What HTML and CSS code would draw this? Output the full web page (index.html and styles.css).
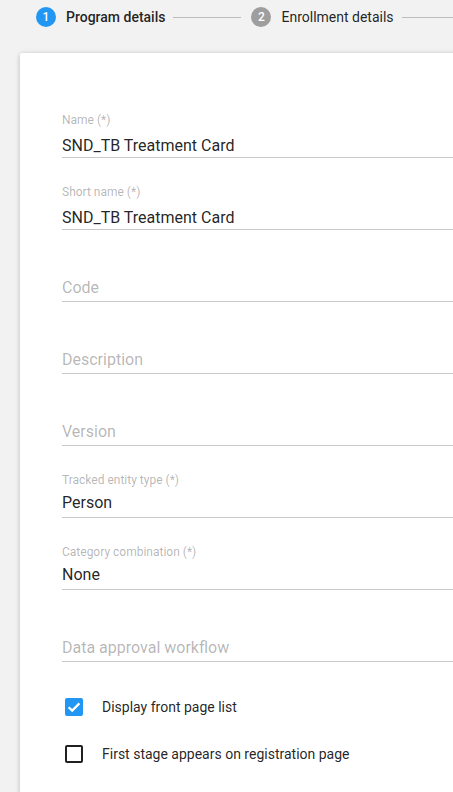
FILE: index.html
```html
<!DOCTYPE html>
<html>
<head>
<meta charset="utf-8">
<link rel="stylesheet" href="styles.css">
</head>
<body>
<div class="page">
  <div class="stepper">
    <div class="step active">
      <span class="step-num">1</span>
      <span class="step-label">Program details</span>
    </div>
    <div class="step-line short"></div>
    <div class="step">
      <span class="step-num">2</span>
      <span class="step-label">Enrollment details</span>
    </div>
    <div class="step-line"></div>
  </div>

  <div class="card">
    <div class="field filled">
      <label class="field-label">Name (*)</label>
      <div class="field-value">SND_TB Treatment Card</div>
    </div>
    <div class="field filled">
      <label class="field-label">Short name (*)</label>
      <div class="field-value">SND_TB Treatment Card</div>
    </div>
    <div class="field empty">
      <div class="field-value placeholder">Code</div>
    </div>
    <div class="field empty">
      <div class="field-value placeholder">Description</div>
    </div>
    <div class="field empty">
      <div class="field-value placeholder">Version</div>
    </div>
    <div class="field filled select">
      <label class="field-label">Tracked entity type (*)</label>
      <div class="field-value">Person</div>
    </div>
    <div class="field filled select">
      <label class="field-label">Category combination (*)</label>
      <div class="field-value">None</div>
    </div>
    <div class="field empty">
      <div class="field-value placeholder">Data approval workflow</div>
    </div>

    <div class="checks">
      <div class="check-row">
        <span class="checkbox checked">
          <svg viewBox="0 0 18 18" width="18" height="18"><path d="M3.6 9.2 L7.2 12.6 L14.4 5.4" fill="none" stroke="#fff" stroke-width="2.2"/></svg>
        </span>
        <span class="check-label">Display front page list</span>
      </div>
      <div class="check-row">
        <span class="checkbox"></span>
        <span class="check-label">First stage appears on registration page</span>
      </div>
    </div>
  </div>
</div>
</body>
</html>
```

FILE: styles.css
```css
html, body {
  margin: 0;
  padding: 0;
  background: #f2f2f2;
  font-family: Roboto, "Noto Sans", sans-serif;
  color: rgba(0, 0, 0, 0.87);
}

.page {
  width: 453px;
  height: 792px;
  overflow: hidden;
}

.stepper {
  display: flex;
  align-items: center;
  height: 20px;
  padding: 7px 0 0 36px;
  white-space: nowrap;
}

.step {
  display: flex;
  align-items: center;
  flex: none;
}

.step-num {
  width: 20px;
  height: 20px;
  border-radius: 50%;
  background: #9e9e9e;
  color: #fff;
  font-size: 12px;
  font-weight: 500;
  line-height: 20px;
  text-align: center;
  margin-right: 10px;
}

.step.active .step-num {
  background: #2196f3;
}

.step-label {
  font-size: 14px;
  line-height: 20px;
}

.step.active .step-label {
  font-weight: 500;
}

.step-line {
  flex: none;
  width: 80px;
  height: 1px;
  background: #bdbdbd;
  margin: 0 10px 0 8px;
}

.step-line.short {
  width: 68px;
}

.card {
  margin: 26px 0 0 20px;
  width: 520px;
  height: 760px;
  background: #fff;
  border-radius: 2px;
  box-shadow: 0 1px 6px rgba(0, 0, 0, 0.12), 0 1px 4px rgba(0, 0, 0, 0.12);
  padding: 41px 0 0 42px;
  box-sizing: border-box;
}

.field {
  display: flex;
  flex-direction: column;
  height: 72px;
  box-sizing: border-box;
  padding-top: 18px;
}

.field-label {
  font-size: 12px;
  line-height: 16px;
  color: rgba(0, 0, 0, 0.3);
}

.field-value {
  font-size: 16px;
  line-height: 24px;
  height: 23px;
  padding-top: 1px;
  margin-top: 5px;
  border-bottom: 1px solid #c8c8c8;
}

.field.select .field-value {
  height: 24px;
  padding-top: 0;
  line-height: 20px;
}

.field.empty .field-value {
  margin-top: 21px;
  height: 22px;
  padding-top: 2px;
  line-height: 18px;
}

.placeholder {
  color: rgba(0, 0, 0, 0.3);
}

.checks {
  padding-top: 28px;
}

.check-row {
  display: flex;
  align-items: center;
  height: 18px;
  margin-bottom: 29px;
  padding-left: 3px;
}

.checkbox {
  width: 18px;
  height: 18px;
  box-sizing: border-box;
  border: 2px solid rgba(0, 0, 0, 0.87);
  border-radius: 2px;
  margin-right: 19px;
  flex: none;
}

.checkbox.checked {
  border: none;
  background: #2196f3;
}

.checkbox svg {
  display: block;
}

.check-label {
  font-size: 14px;
  line-height: 18px;
}
```
